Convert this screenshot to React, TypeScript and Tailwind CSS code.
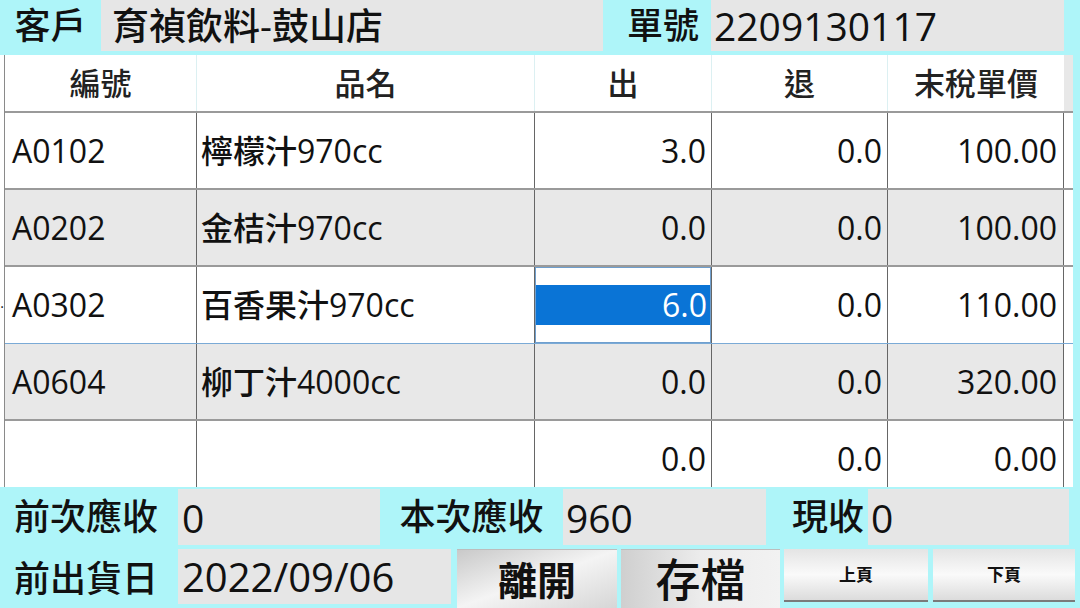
import React from 'react';

type Row = {
  code: string;
  name: string;
  out: string;
  ret: string;
  price: string;
};

const rows: Row[] = [
  { code: 'A0102', name: '檸檬汁970cc', out: '3.0', ret: '0.0', price: '100.00' },
  { code: 'A0202', name: '金桔汁970cc', out: '0.0', ret: '0.0', price: '100.00' },
  { code: 'A0302', name: '百香果汁970cc', out: '6.0', ret: '0.0', price: '110.00' },
  { code: 'A0604', name: '柳丁汁4000cc', out: '0.0', ret: '0.0', price: '320.00' },
  { code: '', name: '', out: '0.0', ret: '0.0', price: '0.00' },
];

const font = { fontFamily: '"Open Sans", "Noto Sans CJK TC", sans-serif' };

const App = () => {
  return (
    <div
      className="w-[1080px] h-[608px] bg-[#aef5f9] flex flex-col overflow-hidden text-[#111] font-medium"
      style={font}
    >
      {/* Top bar */}
      <div className="h-[55px] flex items-start shrink-0">
        <div className="w-[101px] h-[51px] flex items-center justify-center text-[36px] leading-none">
          客戶
        </div>
        <div className="w-[502px] h-[51px] bg-[#e6e6e6] flex items-center pl-[11px] text-[37px] leading-none">
          育禎飲料-鼓山店
        </div>
        <div className="w-[108px] h-[51px] flex items-center justify-end pr-[12px] text-[36px] leading-none">
          單號
        </div>
        <div className="w-[353px] h-[51px] bg-[#e6e6e6] flex items-center pl-[3px] text-[39px] leading-none">
          2209130117
        </div>
      </div>

      {/* Grid */}
      <div className="h-[432px] shrink-0 flex bg-white mr-[7px] overflow-hidden">
        <div className="w-[4px] shrink-0 bg-white flex flex-col">
          <div className="h-[58px]" />
          <div className="h-[77px]" />
          <div className="h-[78px]" />
          <div className="h-[77px] flex items-center justify-center text-[14px] leading-none">·</div>
        </div>
        <div className="flex-1 flex flex-col border-l border-[#8a8a8a]">
          {/* Header */}
          <div className="h-[58px] shrink-0 flex border-b-2 border-[#9a9a9a] text-[31px] leading-none text-[#222]">
            <div className="w-[192px] flex items-center justify-center border-r border-[#dcf0f2]">編號</div>
            <div className="w-[338px] flex items-center justify-center border-r border-[#dcf0f2]">品名</div>
            <div className="w-[177px] flex items-center justify-center border-r border-[#dcf0f2]">出</div>
            <div className="w-[176px] flex items-center justify-center border-r border-[#dcf0f2]">退</div>
            <div className="w-[176px] flex items-center justify-center">末稅單價</div>
            <div className="flex-1 bg-[#e8e8e8]" />
          </div>

          {rows.map((r, i) => {
            const selected = i === 2;
            const grey = i % 2 === 1;
            return (
              <div
                key={i}
                className={
                  'h-[77px] shrink-0 flex text-[32px] leading-none ' +
                  (grey ? 'bg-[#e8e8e8] ' : 'bg-white ') +
                  (selected ? 'border-b border-[#7aaad6] ' : 'border-b-2 border-[#9a9a9a] ')
                }
              >
                <div className="w-[192px] flex items-center pl-[7px] border-r border-[#666]">{r.code}</div>
                <div className="w-[338px] flex items-center pl-[4px] border-r border-[#666]">{r.name}</div>
                {selected ? (
                  <div className="w-[177px] border-r border-[#666] p-0 flex">
                    <div className="flex-1 border border-[#6f9fce] flex items-center">
                      <div className="w-full h-[40px] bg-[#0a74d6] text-white flex items-center justify-end pr-[3px]">
                        {r.out}
                      </div>
                    </div>
                  </div>
                ) : (
                  <div className="w-[177px] flex items-center justify-end pr-[5px] border-r border-[#666]">{r.out}</div>
                )}
                <div className="w-[176px] flex items-center justify-end pr-[5px] border-r border-[#666]">{r.ret}</div>
                <div className="w-[176px] flex items-center justify-end pr-[6px] border-r border-[#666]">{r.price}</div>
                <div className="flex-1 bg-white" />
              </div>
            );
          })}
        </div>
      </div>

      {/* Bottom panel */}
      <div className="flex-1 flex flex-col pt-[2px] text-[36px] leading-none">
        <div className="h-[56px] flex items-center">
          <div className="w-[178px] pl-[14px]">前次應收</div>
          <div className="w-[202px] h-full bg-[#e6e6e6] flex items-center pl-[4px] text-[39px]">0</div>
          <div className="w-[183px] text-center">本次應收</div>
          <div className="w-[203px] h-full bg-[#e6e6e6] flex items-center pl-[3px] text-[39px]">960</div>
          <div className="w-[102px] text-right pr-[4px]">現收</div>
          <div className="w-[201px] h-full bg-[#e6e6e6] flex items-center pl-[3px] text-[39px]">0</div>
        </div>
        <div className="flex-1 flex items-stretch pt-[4px]">
          <div className="w-[178px] pl-[14px] flex items-center">前出貨日</div>
          <div className="w-[273px] mb-[4px] bg-[#e6e6e6] flex items-center pl-[4px] text-[40px]">2022/09/06</div>
          <button className="ml-[6px] w-[160px] bg-gradient-to-br from-[#c9c9c9] via-[#f4f4f4] to-[#d6d6d6] flex items-center justify-center text-[39px] font-semibold border-t border-[#bdbdbd]">
            離開
          </button>
          <button className="ml-[4px] w-[159px] bg-gradient-to-r from-[#cfcfcf] via-[#ececec] to-[#f2f2f2] flex items-center justify-center text-[45px] font-medium border-t border-[#bdbdbd]">
            存檔
          </button>
          <button className="ml-[4px] w-[144px] mb-[6px] bg-gradient-to-b from-[#e4e4e4] via-[#fafafa] to-[#dcdcdc] border-b-2 border-[#7a7a7a] flex items-center justify-center text-[17px] font-bold">
            上頁
          </button>
          <button className="ml-[5px] w-[142px] mb-[6px] bg-gradient-to-b from-[#e4e4e4] via-[#fafafa] to-[#dcdcdc] border-b-2 border-[#7a7a7a] flex items-center justify-center text-[17px] font-bold">
            下頁
          </button>
        </div>
      </div>
    </div>
  );
};

export default App;
